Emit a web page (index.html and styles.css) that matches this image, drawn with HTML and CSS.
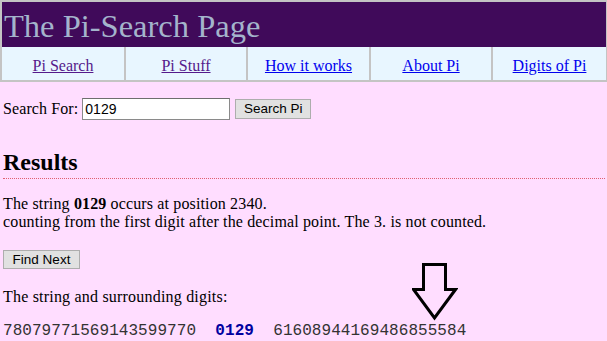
FILE: index.html
```html
<!DOCTYPE html>
<html>
<head>
<meta charset="utf-8">
<title>The Pi-Search Page</title>
<link rel="stylesheet" href="styles.css">
</head>
<body>
<div class="top">
  <div class="banner"><h1>The Pi-Search Page</h1></div>
  <nav class="nav">
    <a class="visited" href="#">Pi Search</a>
    <a class="visited" href="#">Pi Stuff</a>
    <a href="#">How it works</a>
    <a href="#">About Pi</a>
    <a href="#">Digits of Pi</a>
  </nav>
</div>
<main class="content">
  <form class="search">
    <label>Search For:</label>
    <input class="field" type="text" value="0129">
    <button class="btn" type="button">Search Pi</button>
  </form>
  <h2 class="results">Results</h2>
  <p class="msg">The string <b>0129</b> occurs at position 2340.<br>counting from the first digit after the decimal point. The 3. is not counted.</p>
  <button class="btn next" type="button">Find Next</button>
  <p class="label">The string and surrounding digits:</p>
  <div class="digits">78079771569143599770  <b>0129</b>  61608944169486855584</div>
  <svg class="arrow" width="46" height="60" viewBox="0 0 46 60">
    <path d="M11.5 2.5 H33.5 V27.5 H43.5 L22.5 56 L1.5 27.5 H11.5 Z" fill="none" stroke="#000" stroke-width="3" stroke-linejoin="miter"/>
  </svg>
</main>
</body>
</html>
```
FILE: styles.css
```css
html, body {
  margin: 0;
  padding: 0;
  background: #ffddff;
}
body {
  font-family: "Liberation Serif", "Times New Roman", serif;
  font-size: 16px;
  color: #000;
  width: 607px;
  height: 341px;
  overflow: hidden;
  position: relative;
}
.top {
  width: 604px;
  border-top: 2px solid #c4c4c4;
  border-left: 2px solid #c4c4c4;
  border-right: 1px solid #c4c4c4;
}
.banner {
  background: #400a5a;
  height: 45px;
}
.banner h1 {
  margin: 0;
  padding: 2px 0 0 2px;
  font-weight: normal;
  font-size: 32.5px;
  line-height: 44px;
  color: #a4b4cc;
}
.nav {
  display: grid;
  grid-template-columns: 122px 122px 123px 122px 1fr;
  background: #e8f6ff;
  border-bottom: 2px solid #c4c4c4;
}
.nav a {
  text-align: center;
  padding: 10px 0 5px;
  line-height: 18px;
  color: #0000ee;
  border-left: 2px solid #c4c4c4;
}
.nav a:first-child {
  border-left: none;
}
.nav a.visited {
  color: #551a8b;
}
.content {
  padding: 0 3px;
}
.search {
  margin: 15px 0 0;
  display: flex;
  align-items: center;
  height: 23px;
}
.search label {
  margin-right: 4px;
  letter-spacing: 0.1px;
}
.field {
  width: 142px;
  height: 18px;
  padding: 1px 2px;
  border: 1px solid #8a8a8a;
  border-top-color: #6e6e6e;
  font-family: "Liberation Sans", Arial, sans-serif;
  font-size: 14px;
  margin: 0 5px 0 0;
  background: #fff;
}
.btn {
  font-family: "Liberation Sans", Arial, sans-serif;
  font-size: 13.5px;
  background: #e1e1e1;
  border: 1px solid #adadad;
  color: #000;
  padding: 0;
  width: 76px;
  height: 20px;
  line-height: 18px;
  margin: 0;
}
.results {
  margin: 29px 0 0;
  font-size: 24px;
  line-height: 26px;
  padding-bottom: 3px;
  border-bottom: 1px dotted #e06070;
  margin-right: -1px;
}
.msg {
  margin: 16px 0 0;
  line-height: 18px;
  letter-spacing: 0.14px;
}
.next {
  margin-top: 19px;
  width: 77px;
  height: 19px;
}
.label {
  margin: 19px 0 0;
  line-height: 18px;
  letter-spacing: 0.2px;
}
.digits {
  margin-top: 16px;
  font-family: "Liberation Mono", "Courier New", monospace;
  font-size: 16px;
  line-height: 18px;
  white-space: pre;
  color: #333;
  letter-spacing: 0.05px;
}
.digits b {
  color: #0000a0;
}
.arrow {
  position: absolute;
  left: 412px;
  top: 262px;
}
```
